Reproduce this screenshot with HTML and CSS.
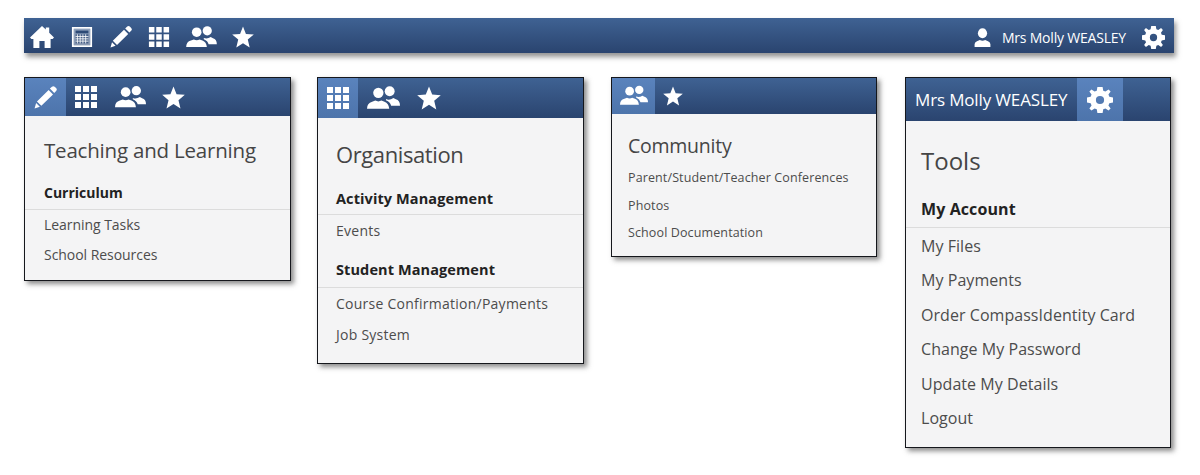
FILE: index.html
```html
<!DOCTYPE html>
<html lang="en">
<head>
<meta charset="utf-8">
<title>Compass menus</title>
<link rel="stylesheet" href="styles.css">
</head>
<body>
<svg class="defs" width="0" height="0" aria-hidden="true">
  <defs>
    <symbol id="i-home" viewBox="0 0 24 24"><path d="M12 1 L15.8 4.6 V2.6 H19.2 V7.8 L24 12.4 L22.6 14 H20.6 V23 H14.6 V16 H9.4 V23 H3.4 V14 H1.4 L0 12.4 Z"/></symbol>
    <symbol id="i-cal" viewBox="0 0 24 24"><path fill-rule="evenodd" d="M1 1 H23 V23 H1 Z M3 3 V21 H21 V3 Z"/><path d="M3 3 H21 V21 H3 Z" opacity=".45"/><path d="M5 5 H19 V8 H5 Z" fill="#2d4a76"/><path d="M5 9 H19 V19 H5 Z" fill="#2d4a76" opacity=".75"/><path d="M7 9 V19 M10 9 V19 M13 9 V19 M16 9 V19 M5 11.5 H19 M5 14 H19 M5 16.5 H19" stroke="#fff" stroke-width=".9" fill="none"/></symbol>
    <symbol id="i-pen" viewBox="0 0 24 24"><path d="M18.2 1.6 Q19.6 .6 20.8 1.6 L22.4 3.2 Q23.4 4.4 22.4 5.6 L20.4 7.6 L16.2 3.4 Z M15 4.8 L19.2 9 L8 20 L3.8 15.8 Z M3 17.2 L6.6 20.8 L1.5 22.5 Z"/></symbol>
    <symbol id="i-grid" viewBox="0 0 24 24"><path d="M1 1 H7 V7 H1 Z M9 1 H15 V7 H9 Z M17 1 H23 V7 H17 Z M1 9 H7 V15 H1 Z M9 9 H15 V15 H9 Z M17 9 H23 V15 H17 Z M1 17 H7 V23 H1 Z M9 17 H15 V23 H9 Z M17 17 H23 V23 H17 Z"/></symbol>
    <symbol id="i-people" viewBox="0 0 32 24"><circle cx="11" cy="6.5" r="5"/><circle cx="22" cy="5" r="4.8"/><path d="M0 22 Q0 16.5 5 15.2 L8 14 Q11 15.6 14 14 L17 15.2 Q21 16.6 21.6 22 Z"/><path d="M18.4 12.6 Q22 14 25.6 11.6 L28 12.8 Q32 14 32 19 H23.4 Q22.6 15.6 18.4 13.8 Z"/></symbol>
    <symbol id="i-star" viewBox="0 0 24 24"><path d="M12 .5 L15.2 8.6 L23.8 9.2 L17.2 14.8 L19.3 23.4 L12 18.7 L4.7 23.4 L6.8 14.8 L.2 9.2 L8.8 8.6 Z"/></symbol>
    <symbol id="i-user" viewBox="0 0 24 24"><ellipse cx="12" cy="6.6" rx="5.8" ry="6.4"/><path d="M2 24 V20.4 Q2 17.6 5 16.6 L8.6 15 Q12 17 15.4 15 L19 16.6 Q22 17.6 22 20.4 V24 Z"/></symbol>
    <symbol id="i-gear" viewBox="0 0 24 24"><path fill-rule="evenodd" d="M9.6 0 H14.4 L15 3.4 L17 4.2 L19.9 2.2 L21.8 4.1 L19.8 7 L20.6 9 L24 9.6 V14.4 L20.6 15 L19.8 17 L21.8 19.9 L19.9 21.8 L17 19.8 L15 20.6 L14.4 24 H9.6 L9 20.6 L7 19.8 L4.1 21.8 L2.2 19.9 L4.2 17 L3.4 15 L0 14.4 V9.6 L3.4 9 L4.2 7 L2.2 4.1 L4.1 2.2 L7 4.2 L9 3.4 Z M12 8.2 A3.8 3.8 0 1 0 12 15.8 A3.8 3.8 0 1 0 12 8.2 Z"/></symbol>
  </defs>
</svg>

<header class="topbar">
  <nav class="topbar-group">
    <svg class="ti ti-home"><use href="#i-home"/></svg>
    <svg class="ti ti-cal"><use href="#i-cal"/></svg>
    <svg class="ti ti-pen"><use href="#i-pen"/></svg>
    <svg class="ti ti-grid"><use href="#i-grid"/></svg>
    <svg class="ti ti-people"><use href="#i-people"/></svg>
    <svg class="ti ti-star"><use href="#i-star"/></svg>
  </nav>
  <div class="topbar-user">
    <svg class="ti ti-user"><use href="#i-user"/></svg>
    <span class="topbar-name">Mrs Molly WEASLEY</span>
    <svg class="ti ti-gear"><use href="#i-gear"/></svg>
  </div>
</header>

<main class="cards">
  <section class="card card-teach">
    <div class="card-head">
      <span class="tab tab-active"><svg class="ci-pen"><use href="#i-pen"/></svg></span>
      <span class="tab"><svg class="ci-grid"><use href="#i-grid"/></svg></span>
      <span class="tab"><svg class="ci-people"><use href="#i-people"/></svg></span>
      <span class="tab"><svg class="ci-star"><use href="#i-star"/></svg></span>
    </div>
    <div class="card-body">
      <h2 class="title">Teaching and Learning</h2>
      <h3 class="group">Curriculum</h3>
      <a class="item">Learning Tasks</a>
      <a class="item">School Resources</a>
    </div>
  </section>

  <section class="card card-org">
    <div class="card-head">
      <span class="tab tab-active"><svg class="ci-grid"><use href="#i-grid"/></svg></span>
      <span class="tab"><svg class="ci-people"><use href="#i-people"/></svg></span>
      <span class="tab"><svg class="ci-star"><use href="#i-star"/></svg></span>
    </div>
    <div class="card-body">
      <h2 class="title">Organisation</h2>
      <h3 class="group">Activity Management</h3>
      <a class="item">Events</a>
      <h3 class="group group-next">Student Management</h3>
      <a class="item">Course Confirmation/Payments</a>
      <a class="item">Job System</a>
    </div>
  </section>

  <section class="card card-comm">
    <div class="card-head">
      <span class="tab tab-active"><svg class="ci-people"><use href="#i-people"/></svg></span>
      <span class="tab"><svg class="ci-star"><use href="#i-star"/></svg></span>
    </div>
    <div class="card-body">
      <h2 class="title">Community</h2>
      <a class="item">Parent/Student/Teacher Conferences</a>
      <a class="item">Photos</a>
      <a class="item">School Documentation</a>
    </div>
  </section>

  <section class="card card-tools">
    <div class="card-head">
      <span class="head-name">Mrs Molly WEASLEY</span>
      <span class="tab tab-active"><svg class="ci-gear"><use href="#i-gear"/></svg></span>
    </div>
    <div class="card-body">
      <h2 class="title">Tools</h2>
      <h3 class="group">My Account</h3>
      <a class="item">My Files</a>
      <a class="item">My Payments</a>
      <a class="item">Order CompassIdentity Card</a>
      <a class="item">Change My Password</a>
      <a class="item">Update My Details</a>
      <a class="item">Logout</a>
    </div>
  </section>
</main>
</body>
</html>
```
FILE: styles.css
```css
* { box-sizing: border-box; }
html, body { margin: 0; padding: 0; }
body {
  background: #fff;
  width: 1200px;
  height: 475px;
  overflow: hidden;
  padding: 18px 0 0 24px;
  font-family: "Open Sans", "Noto Sans", sans-serif;
  color: #444;
}
.defs { position: absolute; }
svg { fill: #fff; display: block; flex: none; }

.topbar {
  width: 1150px;
  height: 35px;
  background: linear-gradient(#3f6293, #2a446f);
  box-shadow: 2px 4px 5px rgba(60, 60, 60, .55);
  display: flex;
  align-items: center;
  justify-content: space-between;
  padding: 3px 9px 0 6px;
}
.topbar-group { display: flex; align-items: center; }
.ti-home { width: 24px; height: 24px; }
.ti-cal { width: 22px; height: 22px; margin-left: 17px; }
.ti-pen { width: 24px; height: 24px; margin-left: 16px; }
.ti-grid { width: 22px; height: 22px; margin-left: 15px; }
.ti-people { width: 31px; height: 23px; margin-left: 16px; }
.ti-star { width: 22px; height: 22px; margin-left: 15px; }
.topbar-user { display: flex; align-items: center; }
.ti-user { width: 19px; height: 23px; }
.topbar-name { color: #fff; font-size: 14px; letter-spacing: -.2px; margin-left: 10px; margin-right: 16px; }
.ti-gear { width: 23px; height: 23px; }

.cards { display: flex; align-items: flex-start; margin-top: 24px; }
.card {
  border: 1px solid #15171c;
  background: #f4f4f5;
  box-shadow: 3px 3px 5px rgba(60, 60, 60, .6);
  flex: none;
}
.card-teach { width: 267px; height: 204px; }
.card-org { width: 267px; height: 287px; margin-left: 26px; }
.card-comm { width: 266px; height: 180px; margin-left: 27px; }
.card-tools { width: 266px; height: 371px; margin-left: 28px; }

.card-head {
  display: flex;
  align-items: stretch;
  background: linear-gradient(#3f6293, #2a446f);
}
.tab { display: flex; align-items: center; justify-content: center; }
.tab-active { background: linear-gradient(#5a83bd, #4d74ab); }
.title { margin: 0; font-weight: 400; color: #454545; }
.group { margin: 0; font-weight: 700; color: #222; border-bottom: 1px solid #dcdcdc; }
.item { display: block; color: #4c4c4c; }

.card-teach .card-head { height: 38px; }
.card-teach .tab { padding: 0 0 0 21px; }
.card-teach .tab-active { padding: 0 7px; width: 41px; }
.card-teach .ci-pen { width: 25px; height: 25px; }
.card-teach .ci-grid { width: 24px; height: 24px; margin-left: -13px; }
.card-teach .ci-people { width: 31px; height: 25px; margin-left: -4px; }
.card-teach .ci-star { width: 23px; height: 23px; margin-left: -5px; }
.card-teach .card-body { padding-top: 20px; }
.card-teach .title { font-size: 20.5px; letter-spacing: -.2px; line-height: 28px; padding-left: 19px; }
.card-teach .group { font-size: 14px; line-height: 20px; padding: 0 0 6px 19px; margin-top: 19px; }
.card-teach .item { font-size: 14px; line-height: 30px; padding-left: 19px; letter-spacing: -.05px; }

.card-org .card-head { height: 40px; }
.card-org .tab { padding-left: 9px; }
.card-org .tab-active { padding: 0; width: 40px; }
.card-org .ci-grid { width: 24px; height: 24px; }
.card-org .ci-people { width: 33px; height: 25px; }
.card-org .ci-star { width: 24px; height: 24px; margin-left: 8px; }
.card-org .card-body { padding-top: 21px; }
.card-org .title { font-size: 22px; letter-spacing: -.4px; line-height: 30px; padding-left: 18px; }
.card-org .group { font-size: 14.5px; letter-spacing: .1px; line-height: 20px; padding: 0 0 5px 18px; margin-top: 20px; }
.card-org .group-next { margin-top: 14px; padding-bottom: 7px; }
.card-org .item { font-size: 14px; letter-spacing: .25px; line-height: 31px; padding-left: 18px; }

.card-comm .card-head { height: 36px; }
.card-comm .tab { padding-left: 8px; }
.card-comm .tab-active { padding: 0; width: 43px; }
.card-comm .ci-people { width: 28px; height: 22px; }
.card-comm .ci-star { width: 20px; height: 20px; }
.card-comm .card-body { padding-top: 18px; }
.card-comm .title { font-size: 19.5px; letter-spacing: -.25px; line-height: 28px; padding-left: 16px; margin-bottom: 4px; }
.card-comm .item { font-size: 12.5px; letter-spacing: .12px; line-height: 27.5px; padding-left: 16px; }

.card-tools .card-head { height: 43px; }
.head-name { color: #fff; font-size: 17px; letter-spacing: -.15px; align-self: center; padding-left: 9px; width: 171px; white-space: nowrap; }
.card-tools .tab-active { width: 46px; }
.card-tools .ci-gear { width: 26px; height: 26px; }
.card-tools .card-body { padding-top: 23px; }
.card-tools .title { font-size: 24px; line-height: 34px; padding-left: 15px; }
.card-tools .group { font-size: 16px; letter-spacing: .1px; line-height: 22px; padding: 0 0 7px 15px; margin-top: 20px; }
.card-tools .item { font-size: 16px; letter-spacing: .05px; line-height: 34.4px; padding-left: 15px; }
.card-tools .group + .item { margin-top: 1px; }
```
